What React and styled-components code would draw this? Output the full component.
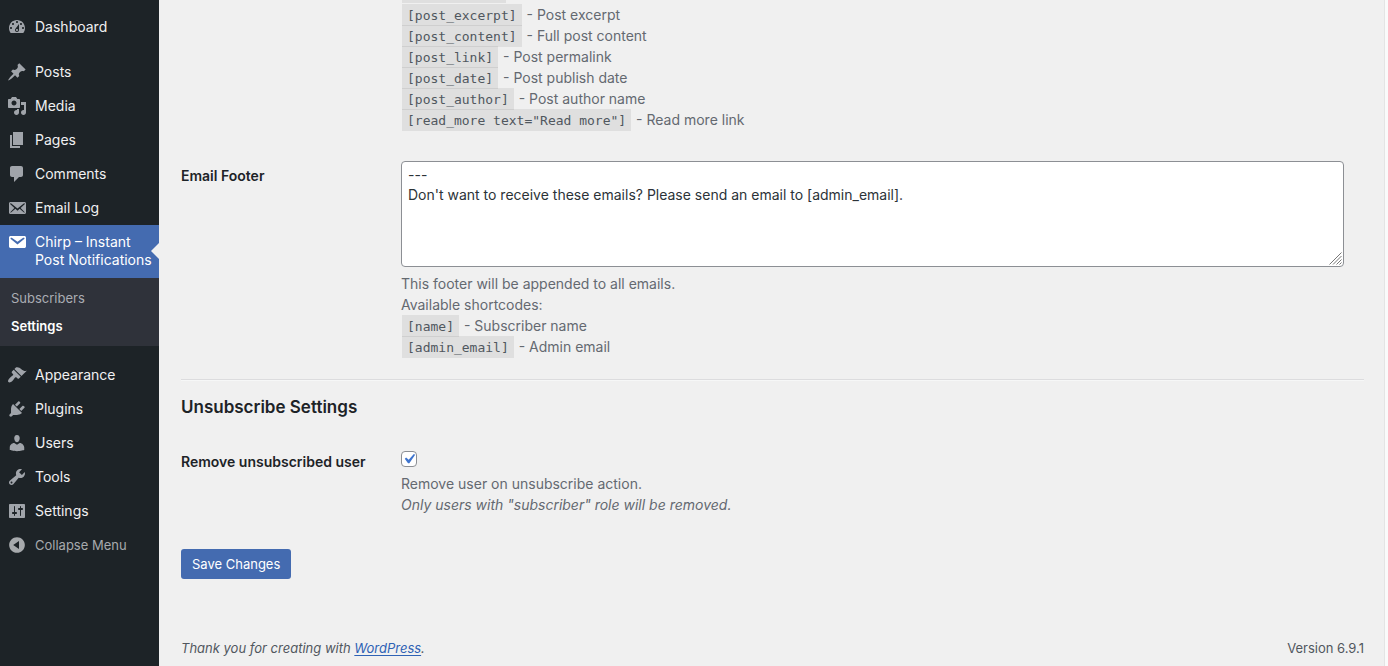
import React, { useState } from 'react';
import styled, { createGlobalStyle, css } from 'styled-components';

const GlobalStyle = createGlobalStyle`
  *, *::before, *::after {
    box-sizing: border-box;
  }

  body {
    margin: 0;
    background: #f0f0f0;
    color: #1d2327;
    font-family: Inter, "Liberation Sans", sans-serif;
    font-size: 14px;
    line-height: 21px;
  }
`;

const icons = {
  dashboard: 'M3.76 16h12.48c1.1-1.37 1.76-3.11 1.76-5 0-4.42-3.58-8-8-8s-8 3.58-8 8c0 1.89.66 3.63 1.76 5zM10 4c.55 0 1 .45 1 1s-.45 1-1 1-1-.45-1-1 .45-1 1-1zM6 6c.55 0 1 .45 1 1s-.45 1-1 1-1-.45-1-1 .45-1 1-1zm8 0c.55 0 1 .45 1 1s-.45 1-1 1-1-.45-1-1 .45-1 1-1zm-5.37 5.55L12 7v6c0 1.1-.9 2-2 2s-2-.9-2-2c0-.57.24-1.08.63-1.45zM4 10c.55 0 1 .45 1 1s-.45 1-1 1-1-.45-1-1 .45-1 1-1zm12 0c.55 0 1 .45 1 1s-.45 1-1 1-1-.45-1-1 .45-1 1-1zm-5 3c0-.55-.45-1-1-1s-1 .45-1 1 .45 1 1 1 1-.45 1-1z',
  posts: 'M10.44 3.02l1.82-1.82 6.36 6.35-1.83 1.82c-1.05-.68-2.48-.57-3.41.36l-.75.75c-.92.93-1.04 2.35-.35 3.41l-1.83 1.82-2.41-2.41-2.8 2.79c-.42.42-3.38 2.71-3.8 2.29s1.86-3.39 2.28-3.81l2.79-2.79L4.1 9.36l1.83-1.82c1.05.69 2.48.57 3.4-.36l.75-.75c.93-.92 1.05-2.35.36-3.41z',
  media: 'M13 11V4c0-.55-.45-1-1-1h-1.67L9 1H5L3.67 3H2c-.55 0-1 .45-1 1v7c0 .55.45 1 1 1h10c.55 0 1-.45 1-1zM7 4.5c1.38 0 2.5 1.12 2.5 2.5S8.38 9.5 7 9.5 4.5 8.38 4.5 7 5.62 4.5 7 4.5zM14 6h5v10.5c0 1.38-1.12 2.5-2.5 2.5S14 17.88 14 16.5s1.12-2.5 2.5-2.5c.17 0 .34.02.5.05V9h-3V6zm-4 8.05V13h2v3.5c0 1.38-1.12 2.5-2.5 2.5S7 17.88 7 16.5 8.12 14 9.5 14c.17 0 .34.02.5.05z',
  pages: 'M6 15V2h10v13H6zm-1 1h8v2H3V5h2v11z',
  comments: 'M5 2h9c1.1 0 2 .9 2 2v7c0 1.1-.9 2-2 2h-2l-5 5v-5H5c-1.1 0-2-.9-2-2V4c0-1.1.9-2 2-2z',
  emailAlt: 'M19 14.5v-9c0-.83-.67-1.5-1.5-1.5H3.49c-.83 0-1.5.67-1.5 1.5v9c0 .83.67 1.5 1.5 1.5H17.5c.83 0 1.5-.67 1.5-1.5zm-1.31-9.11c.33.33.15.67-.03.84L13.6 9.95l3.9 4.06c.12.14.2.36.06.51-.13.16-.43.15-.56.05l-4.37-3.73-2.14 1.95-2.13-1.95-4.37 3.73c-.13.1-.43.11-.56-.05-.14-.15-.06-.37.06-.51l3.9-4.06-4.06-3.72c-.18-.17-.36-.51-.03-.84s.67-.17.95.07l6.24 5.04 6.25-5.04c.28-.24.62-.4.95-.07z',
  email: 'M3.87 4h13.25C18.37 4 19 4.59 19 5.79v8.42c0 1.19-.63 1.79-1.88 1.79H3.87c-1.25 0-1.88-.6-1.88-1.79V5.79c0-1.2.63-1.79 1.88-1.79zm6.62 8.6l6.74-5.53c.24-.2.43-.66.13-1.07-.29-.41-.82-.42-1.17-.17l-5.7 3.86L4.8 5.83c-.35-.25-.88-.24-1.17.17-.3.41-.11.87.13 1.07z',
  appearance: 'M14.48 11.06L7.41 3.99l1.5-1.5c.5-.56 2.3-.47 3.51.32 1.21.8 1.43 1.28 2.91 2.1 1.18.64 2.45 1.26 4.45.85zm-.71.71L6.7 4.7 4.93 6.47c-.39.39-.39 1.02 0 1.41l1.06 1.06c.39.39.39 1.03 0 1.42-.6.6-1.43 1.11-2.21 1.69-.35.26-.7.53-1.01.84C1.43 14.23.4 16.08 1.4 17.07c.99 1 2.84-.03 4.18-1.36.31-.31.58-.66.85-1.02.57-.78 1.08-1.61 1.69-2.21.39-.39 1.02-.39 1.41 0l1.06 1.06c.39.39 1.02.39 1.41 0z',
  plugins: 'M13.11 4.36L9.87 7.6 8 5.73l3.24-3.24c.35-.34 1.05-.2 1.56.32.52.51.66 1.21.31 1.55zm-8 1.77l.91-1.12 9.01 9.01-1.19.84c-.71.71-2.63 1.16-3.82 1.16H6.14L4.9 17.26c-.59.59-1.54.59-2.12 0-.59-.58-.59-1.53 0-2.12l1.24-1.24v-3.88c0-1.13.4-3.19 1.09-3.89zm7.26 3.97l3.24-3.24c.34-.35 1.04-.21 1.55.31.52.51.66 1.21.31 1.55l-3.24 3.25z',
  users: 'M10 9.25c-2.27 0-2.73-3.44-2.73-3.44C7 4.02 7.82 2 9.97 2c2.16 0 2.98 2.02 2.71 3.81 0 0-.41 3.44-2.68 3.44zm0 2.57L12.72 10c2.39 0 4.52 2.33 4.52 4.53v2.49s-3.65 1.13-7.24 1.13c-3.65 0-7.24-1.13-7.24-1.13v-2.49c0-2.25 1.94-4.48 4.47-4.48z',
  tools: 'M16.68 9.77c-1.34 1.34-3.3 1.67-4.95.99l-5.41 6.52c-.99.99-2.59.99-3.58 0s-.99-2.59 0-3.57l6.52-5.42c-.68-1.65-.35-3.61.99-4.95 1.28-1.28 3.12-1.62 4.72-1.06l-2.89 2.89 2.82 2.82 2.86-2.87c.53 1.58.18 3.39-1.08 4.65zM3.81 16.21c.4.39 1.04.39 1.43 0 .4-.4.4-1.04 0-1.43-.39-.4-1.03-.4-1.43 0-.39.39-.39 1.03 0 1.43z',
  settings: 'M18 16V4c0-.55-.45-1-1-1H3c-.55 0-1 .45-1 1v12c0 .55.45 1 1 1h14c.55 0 1-.45 1-1zM8 11h1c.55 0 1 .45 1 1s-.45 1-1 1H8v1.5c0 .28-.22.5-.5.5s-.5-.22-.5-.5V13H6c-.55 0-1-.45-1-1s.45-1 1-1h1V5.5c0-.28.22-.5.5-.5s.5.22.5.5V11zm5-2h-1c-.55 0-1-.45-1-1s.45-1 1-1h1V5.5c0-.28.22-.5.5-.5s.5.22.5.5V7h1c.55 0 1 .45 1 1s-.45 1-1 1h-1v5.5c0 .28-.22.5-.5.5s-.5-.22-.5-.5V9z',
  collapse: 'M10 2.16c4.33 0 7.84 3.51 7.84 7.84s-3.51 7.84-7.84 7.84S2.16 14.33 2.16 10 5.71 2.16 10 2.16zm2 11.72V6.12L6.18 9.97z',
};

const Layout = styled.div`
  display: flex;
  min-height: 100vh;
`;

const Sidebar = styled.nav`
  flex: 0 0 159px;
  padding-top: 10px;
  background: #1d2327;
`;

const MenuList = styled.ul`
  margin: 0 0 12px;
  padding: 0;
  list-style: none;

  &:first-child {
    margin-bottom: 11px;
  }
`;

const MenuLink = styled.a`
  position: relative;
  display: flex;
  padding: 8px 0 8px 7px;
  color: #f0f0f1;
  line-height: 18px;
  text-decoration: none;

  svg {
    flex: none;
    width: 20px;
    height: 20px;
    margin: -1px 8px -1px 0;
    fill: #a0a4aa;
  }

  ${props => props.$current && css`
    padding-bottom: 9px;
    background: #446bb0;
    color: #fff;

    svg {
      fill: #fff;
    }

    &::after {
      content: '';
      position: absolute;
      top: 18px;
      right: 0;
      border: 8px solid transparent;
      border-left-width: 0;
      border-right-color: #f0f0f0;
    }
  `}
`;

const SubMenu = styled.ul`
  margin: 0;
  padding: 6px 0;
  background: #2f323a;
  list-style: none;
`;

const SubLink = styled.a`
  display: block;
  padding: 5px 11px;
  color: ${props => (props.$current ? '#fff' : '#aaadb3')};
  font-size: 13px;
  font-weight: ${props => (props.$current ? 600 : 400)};
  line-height: 18px;
  text-decoration: none;
`;

const CollapseButton = styled.button`
  display: flex;
  align-items: center;
  gap: 8px;
  width: 100%;
  height: 34px;
  margin-top: -12px;
  padding: 0 7px;
  border: 0;
  background: none;
  color: #a7aaad;
  font: inherit;
  font-size: 13px;

  svg {
    width: 20px;
    height: 20px;
    fill: #a7aaad;
  }
`;

const Main = styled.main`
  display: flex;
  flex: 1;
  flex-direction: column;
  min-width: 0;
  padding: 0 20px 7px 22px;
`;

const Gutter = styled.div`
  flex: 0 0 4px;
  border-left: 1px solid #e4e4e4;
  background: #fafafa;
`;

const Form = styled.form`
  flex: 1;
`;

const Row = styled.div`
  display: grid;
  grid-template-columns: 220px 1fr;
`;

const RowTitle = styled.div`
  padding-top: 20px;
  font-weight: 600;
  line-height: 20px;
`;

const Field = styled.div`
  grid-column: 2;
  padding: ${props => (props.$first ? 0 : '15px')} 20px 16px 0;
`;

const Description = styled.div`
  margin-top: 6px;
  color: #646970;
`;

const CodeEdge = styled.div`
  width: 104px;
  height: 3px;
  margin: 0 1px -5px;
  background: rgba(0, 0, 0, .07);
`;

const Code = styled.code`
  margin: 0 1px;
  padding: 4px 5px 3px;
  background: rgba(0, 0, 0, .07);
  color: #50575e;
  font-family: "DejaVu Sans Mono", monospace;
  font-size: 13px;
  line-height: 1;
`;

const TextAreaWrap = styled.div`
  position: relative;
  display: flex;

  svg {
    position: absolute;
    right: 2px;
    bottom: 2px;
    width: 13px;
    height: 13px;
    pointer-events: none;
  }
`;

const TextArea = styled.textarea`
  width: 100%;
  height: 106px;
  padding: 3px 6px;
  border: 1px solid #8c8f94;
  border-radius: 4px;
  background: #fff;
  color: #2c3338;
  font: inherit;
  line-height: 20px;
  resize: none;
`;

const Divider = styled.hr`
  margin: 6px 0 16px;
  border: 0;
  border-top: 1px solid #dcdcde;
  border-bottom: 1px solid #f6f7f7;
`;

const Heading = styled.h2`
  margin: 0 0 15px;
  font-size: 17px;
  font-weight: 600;
  line-height: 20px;
`;

const Checkbox = styled.input`
  appearance: none;
  display: block;
  width: 16px;
  height: 16px;
  margin: 4px 0 0;
  border: 1px solid #8c8f94;
  border-radius: 4px;
  background: #fff;

  &:checked {
    background: #fff url("data:image/svg+xml;utf8,<svg xmlns='http://www.w3.org/2000/svg' viewBox='0 0 20 20'><path d='M14.83 4.89l1.34.94-5.81 8.38H9.02L5.78 9.67l1.34-1.25 2.57 2.4z' fill='%233e74ce'/></svg>") center / 20px no-repeat;
  }
`;

const SaveButton = styled.button`
  height: 30px;
  margin-top: 18px;
  padding: 0 11px;
  border: 0;
  border-radius: 3px;
  background: #446bb0;
  color: #fff;
  font: inherit;
  font-size: 13px;
`;

const Footer = styled.footer`
  display: flex;
  justify-content: space-between;
  color: #50575e;
  font-size: 13px;

  a {
    color: #2f62b5;
    text-underline-offset: 2px;
  }
`;

const Icon = ({ name }) => (
  <svg viewBox="0 0 20 20" aria-hidden="true">
    <path d={icons[name]} />
  </svg>
);

const MenuItem = ({ icon, label, current, children }) => (
  <li>
    <MenuLink href="#" $current={current}>
      <Icon name={icon} />
      <span>{label}</span>
    </MenuLink>
    {children}
  </li>
);

const contentCodes = [
  ['[post_excerpt]', 'Post excerpt'],
  ['[post_content]', 'Full post content'],
  ['[post_link]', 'Post permalink'],
  ['[post_date]', 'Post publish date'],
  ['[post_author]', 'Post author name'],
  ['[read_more text="Read more"]', 'Read more link'],
];

const footerCodes = [
  ['[name]', 'Subscriber name'],
  ['[admin_email]', 'Admin email'],
];

const Shortcodes = ({ items }) => items.map(([code, text]) => (
  <div key={code}>
    <Code>{code}</Code> - {text}
  </div>
));

export default function App() {
  const [ footer, setFooter ] = useState("---\nDon't want to receive these emails? Please send an email to [admin_email].")
  const [ remove, setRemove ] = useState(true)

  return (
    <>
      <GlobalStyle />
      <Layout>
        <Sidebar>
          <MenuList>
            <MenuItem icon="dashboard" label="Dashboard" />
          </MenuList>
          <MenuList>
            <MenuItem icon="posts" label="Posts" />
            <MenuItem icon="media" label="Media" />
            <MenuItem icon="pages" label="Pages" />
            <MenuItem icon="comments" label="Comments" />
            <MenuItem icon="emailAlt" label="Email Log" />
            <MenuItem icon="email" label="Chirp – Instant Post Notifications" current>
              <SubMenu>
                <li><SubLink href="#">Subscribers</SubLink></li>
                <li><SubLink href="#" $current>Settings</SubLink></li>
              </SubMenu>
            </MenuItem>
          </MenuList>
          <MenuList>
            <MenuItem icon="appearance" label="Appearance" />
            <MenuItem icon="plugins" label="Plugins" />
            <MenuItem icon="users" label="Users" />
            <MenuItem icon="tools" label="Tools" />
            <MenuItem icon="settings" label="Settings" />
          </MenuList>
          <CollapseButton type="button">
            <Icon name="collapse" />
            Collapse Menu
          </CollapseButton>
        </Sidebar>
        <Main>
          <Form onSubmit={e => e.preventDefault()}>
            <Row>
              <Field $first>
                <CodeEdge />
                <Description>
                  <Shortcodes items={contentCodes} />
                </Description>
              </Field>
            </Row>
            <Row>
              <RowTitle>
                <label htmlFor="email-footer">Email Footer</label>
              </RowTitle>
              <Field>
                <TextAreaWrap>
                  <TextArea
                    id="email-footer"
                    value={footer}
                    onChange={e => setFooter(e.target.value)}
                  />
                  <svg viewBox="0 0 13 13" stroke="#777" aria-hidden="true">
                    <path d="M.5 12.5l12-12M4 12.5L12.5 4M7.5 12.5l5-5M10.5 12.5l2-2" />
                  </svg>
                </TextAreaWrap>
                <Description>
                  This footer will be appended to all emails.<br />
                  Available shortcodes:
                  <Shortcodes items={footerCodes} />
                </Description>
              </Field>
            </Row>
            <Divider />
            <Heading>Unsubscribe Settings</Heading>
            <Row>
              <RowTitle>
                <label htmlFor="remove-user">Remove unsubscribed user</label>
              </RowTitle>
              <Field>
                <Checkbox
                  id="remove-user"
                  type="checkbox"
                  checked={remove}
                  onChange={e => setRemove(e.target.checked)}
                />
                <Description>
                  Remove user on unsubscribe action.<br />
                  <em>Only users with "subscriber" role will be removed.</em>
                </Description>
              </Field>
            </Row>
            <SaveButton type="submit">Save Changes</SaveButton>
          </Form>
          <Footer>
            <em>Thank you for creating with <a href="#">WordPress</a>.</em>
            <span>Version 6.9.1</span>
          </Footer>
        </Main>
        <Gutter />
      </Layout>
    </>
  )
}
